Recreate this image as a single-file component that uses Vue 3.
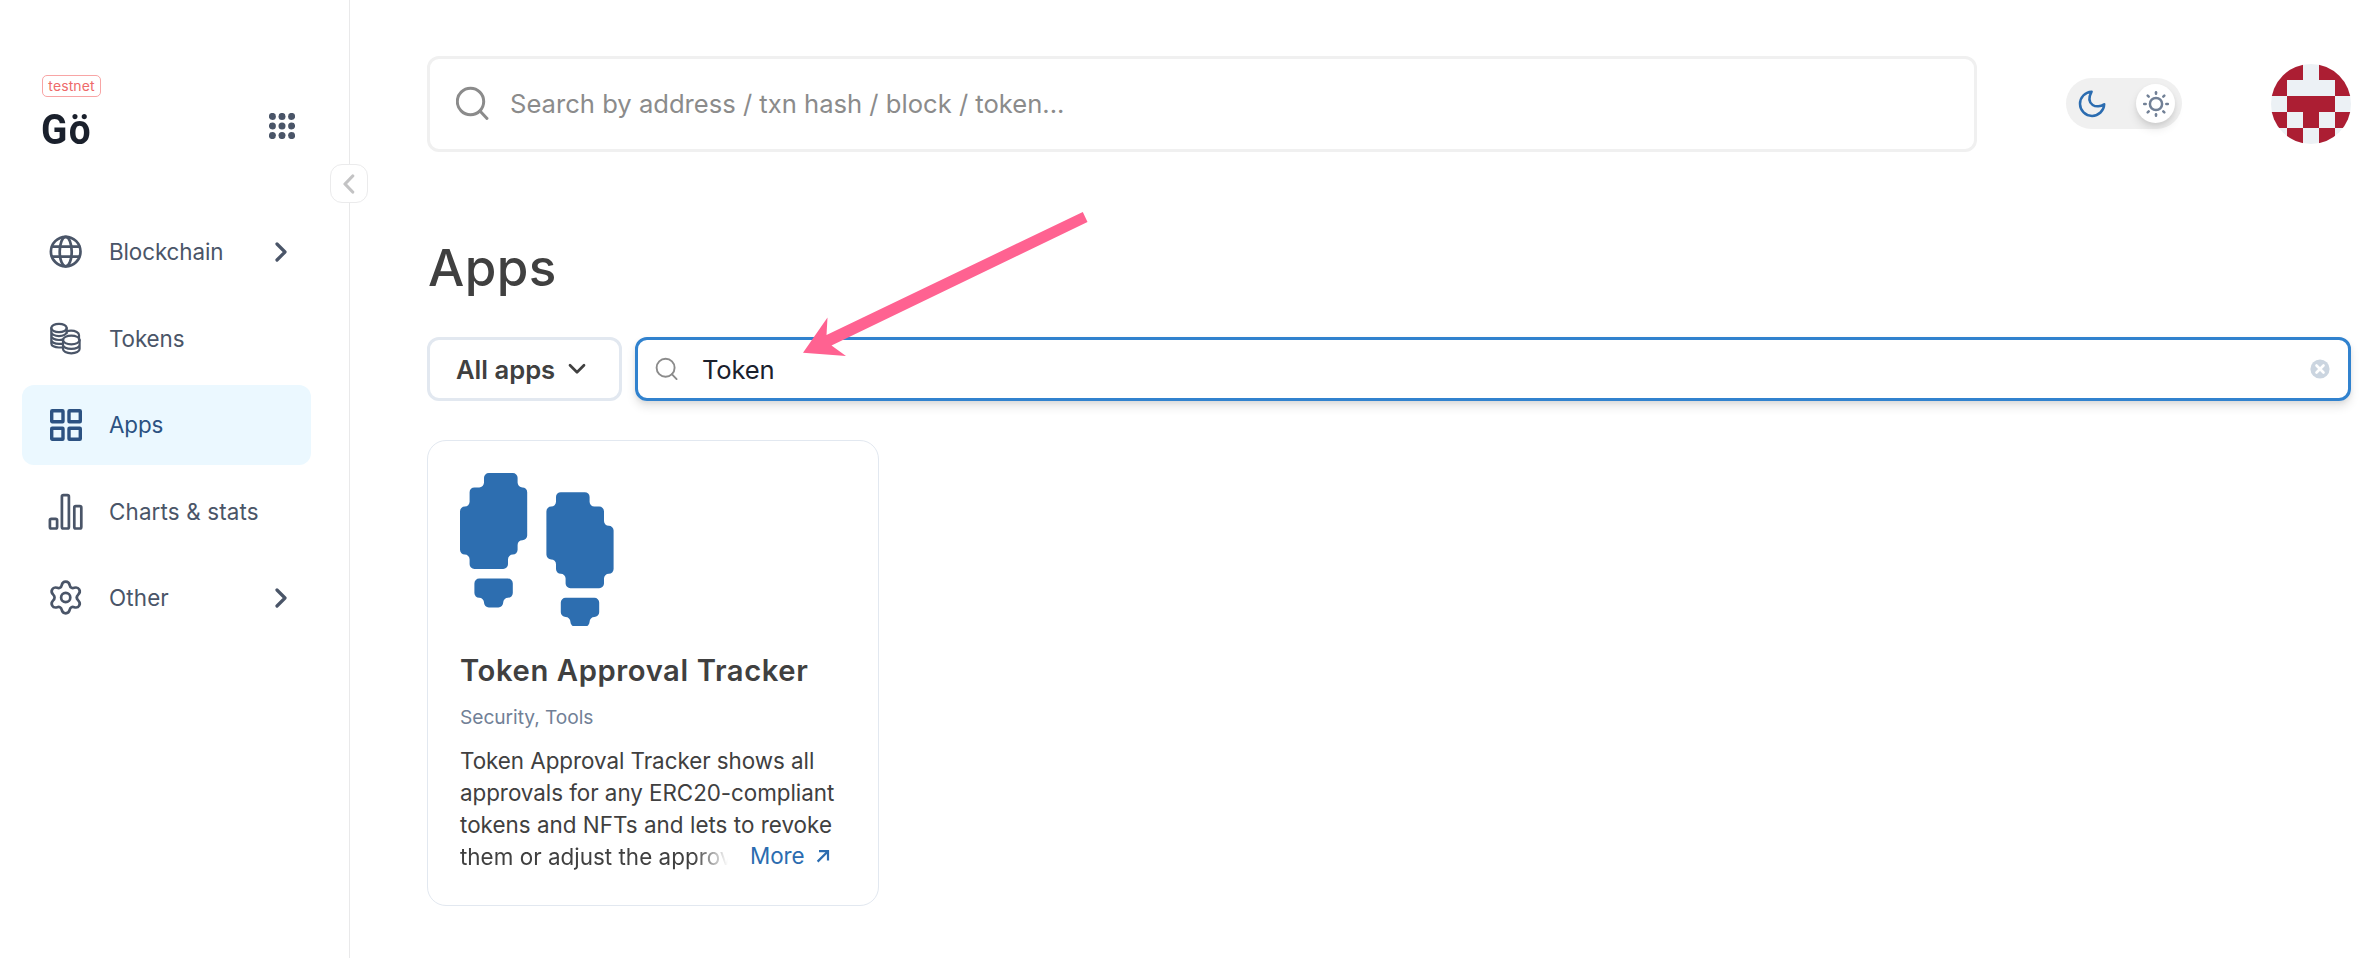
<script setup>
const nav = [
  { id: 'chain', label: 'Blockchain', more: true },
  { id: 'tokens', label: 'Tokens' },
  { id: 'apps', label: 'Apps', active: true },
  { id: 'charts', label: 'Charts & stats' },
  { id: 'other', label: 'Other', more: true },
]

// Turns a closed polygon into a path whose corners all have a one-unit radius.
function rounded(points) {
  const n = points.length
  let d = ''
  for (let i = 0; i < n; i++) {
    const [px, py] = points[(i + n - 1) % n]
    const [x, y] = points[i]
    const [qx, qy] = points[(i + 1) % n]
    const ax = x + Math.sign(px - x)
    const ay = y + Math.sign(py - y)
    const bx = x + Math.sign(qx - x)
    const by = y + Math.sign(qy - y)
    const sweep = (x - px) * (qy - y) - (y - py) * (qx - x) > 0 ? 1 : 0
    d += `${i ? 'L' : 'M'}${ax} ${ay}A1 1 0 0 ${sweep} ${bx} ${by}`
  }
  return d + 'Z'
}

const feet = [
  [[5, 0], [12, 0], [12, 3], [14, 3], [14, 14], [12, 14], [12, 17], [10, 17], [10, 20], [2, 20], [2, 17], [0, 17], [0, 7], [2, 7], [2, 3], [5, 3]],
  [[3, 22], [11, 22], [11, 26], [9, 26], [9, 28], [5, 28], [5, 26], [3, 26]],
  [[20, 4], [27, 4], [27, 7], [30, 7], [30, 11], [32, 11], [32, 21], [30, 21], [30, 24], [22, 24], [22, 21], [20, 21], [20, 18], [18, 18], [18, 7], [20, 7]],
  [[21, 26], [29, 26], [29, 30], [27, 30], [27, 32], [23, 32], [23, 30], [21, 30]],
].map(rounded).join('')

const avatar = ['11011', '10001', '01110', '10101', '01010']
const cells = avatar.flatMap((row, y) => [...row].map((on, x) => ({ x, y, on: on === '1' }))).filter(c => c.on)
const rays = [0, 45, 90, 135, 180, 225, 270, 315]
</script>

<template>
  <div class="page">
    <aside class="side">
      <header class="brand">
        <div>
          <span class="badge">testnet</span>
          <div class="logo">Gö</div>
        </div>
        <svg class="dots" width="26" height="26" viewBox="0 0 26 26">
          <template v-for="r in 3" :key="r">
            <circle v-for="c in 3" :key="c" :cx="3.4 + (c - 1) * 9.6" :cy="3.4 + (r - 1) * 9.6" r="3.5" />
          </template>
        </svg>
      </header>

      <button class="collapse" aria-label="Collapse menu">
        <svg width="12" height="20" viewBox="0 0 12 20"><path d="M9.700 2 2 10l7.700 8" /></svg>
      </button>

      <nav class="menu">
        <a v-for="item in nav" :key="item.id" class="item" :class="{ active: item.active }">
          <svg class="icon" width="36" height="38" viewBox="0 0 36 38">
            <g v-if="item.id === 'chain'" class="line">
              <circle cx="17.700" cy="18.600" r="14.800" />
              <ellipse cx="17.700" cy="18.600" rx="6" ry="14.800" />
              <path d="M4 13.600h27.400M4 23.600h27.400" />
            </g>
            <g v-else-if="item.id === 'tokens'" class="line thin">
              <ellipse cx="11" cy="8" rx="7.700" ry="4.200" />
              <path d="M3.300 8v15.500c0 2.200 3.200 4 7.700 4h3.200M18.700 8v5.200M3.300 11.800c0 2.500 3.400 4.300 7.700 4.300s7.700-1.800 7.700-4.300M3.300 15.800c0 2.400 3.400 4.200 7.700 4.200 1.600 0 3-.200 4.200-.600M3.300 19.800c0 2.300 3.300 4 7.700 4h3.200" />
              <path d="M18.700 11.500c1-.5 2.500-.8 4.300-.8 4.600 0 8 1.900 8 4.200v4.500" />
              <ellipse cx="23.300" cy="20" rx="8.300" ry="4.400" />
              <path d="M15 20v9c0 2.300 3.500 4.300 8.300 4.300s8.300-2 8.300-4.300v-9M15 24.700c0 2.300 3.500 4.200 8.300 4.200s8.300-1.900 8.300-4.200" />
            </g>
            <g v-else-if="item.id === 'apps'" class="line box">
              <rect x="3.700" y="4.700" width="11.300" height="11" rx=".5" />
              <rect x="21" y="4.700" width="11.300" height="11" rx=".5" />
              <rect x="3.700" y="22.200" width="11.300" height="11" rx=".5" />
              <rect x="21" y="22.200" width="11.300" height="11" rx=".5" />
            </g>
            <g v-else-if="item.id === 'charts'" class="line">
              <rect x="1.900" y="25.800" width="7.200" height="9.700" rx="1.500" />
              <rect x="13.900" y="2.200" width="7" height="33.300" rx="1.500" />
              <rect x="26.300" y="13.200" width="7" height="22.300" rx="1.500" />
            </g>
            <g v-else class="line" transform="translate(-.3 .6)">
              <path d="M14 5.600c.6-2.700 2-3.500 4-3.500s3.400.8 4 3.500c.5 2.400 2.300 3.300 4.500 2.600 2.600-.8 4-.1 5 1.600s.9 3.300-1 5.200c-1.800 1.800-1.800 4 0 5.800 1.900 1.900 2 3.500 1 5.200s-2.400 2.400-5 1.600c-2.200-.7-4 .2-4.500 2.600-.6 2.700-2 3.500-4 3.500s-3.400-.8-4-3.500c-.5-2.400-2.300-3.300-4.500-2.600-2.600.8-4 .1-5-1.600s-.9-3.300 1-5.200c1.800-1.800 1.800-4 0-5.800-1.900-1.900-2-3.500-1-5.200s2.400-2.400 5-1.600c2.200.7 4-.2 4.500-2.600Z" />
              <circle cx="18" cy="17.900" r="4.600" />
            </g>
          </svg>
          <span class="label" :class="{ wide: item.id === 'charts' || item.id === 'other' }">{{ item.label }}</span>
          <svg v-if="item.more" class="next" width="12" height="20" viewBox="0 0 12 20"><path d="m2 2 8 8-8 8" /></svg>
        </a>
      </nav>
    </aside>

    <main class="main">
      <div class="top">
        <div class="search">
          <svg width="34" height="36" viewBox="0 0 34 36"><circle cx="14.500" cy="15.500" r="13.200" /><path d="m24 25 7 7.500" /></svg>
          <span class="hint">Search by address / txn hash / block / token...</span>
        </div>
        <div class="toggle">
          <svg class="moon" width="28" height="28" viewBox="0 0 28 28">
            <path d="M13.600 1.700A12.100 12.100 0 1 0 26.200 14.200C19.300 19.300 6.500 15.200 13.600 1.700Z" />
          </svg>
          <span class="knob">
            <svg width="28" height="28" viewBox="0 0 28 28">
              <circle cx="14" cy="14" r="6.100" />
              <path v-for="a in rays" :key="a" d="M14 2.200v1.500" :transform="`rotate(${a} 14 14)`" />
            </svg>
          </span>
        </div>
        <svg class="avatar" width="80" height="80" viewBox="0 0 5 5" shape-rendering="crispEdges">
          <rect width="5" height="5" fill="#ecf1f5" />
          <rect v-for="c in cells" :key="`${c.x}-${c.y}`" :x="c.x" :y="c.y" width="1" height="1" fill="#ac1e33" />
        </svg>
      </div>

      <h1 class="title">Apps</h1>

      <div class="filters">
        <button class="select">
          <span class="select-text">All apps</span>
          <svg width="18" height="12" viewBox="0 0 18 12"><path d="m2 2.300 7 7 7-7" /></svg>
        </button>
        <div class="field">
          <svg class="glass" width="24" height="24" viewBox="0 0 24 24"><circle cx="10.600" cy="10.800" r="9" /><path d="m16.800 17.200 4.800 4.900" /></svg>
          <span class="value">Token</span>
          <svg class="clear" width="20" height="20" viewBox="0 0 20 20"><circle cx="10" cy="10" r="9.600" /><path d="m6.500 6.500 7 7m0-7-7 7" /></svg>
        </div>
      </div>

      <article class="card">
        <svg class="feet" width="153.600" height="153.600" viewBox="0 0 32 32"><path :d="feet" /></svg>
        <h2 class="name">Token Approval Tracker</h2>
        <div class="tags">Security, Tools</div>
        <p class="text">
          <span>Token Approval Tracker shows all</span>
          <span>approvals for any ERC20-compliant</span>
          <span class="full">tokens and NFTs and lets to revoke</span>
          <span class="full last">them or adjust the approv</span>
        </p>
        <a class="more">
          <span>More</span>
          <svg width="14" height="14" viewBox="0 0 14 14"><path d="M3 2.200h9v9.300M12 2.200 1.600 12.600" /></svg>
        </a>
      </article>
    </main>

    <svg class="pointer" width="286" height="146" viewBox="0 0 286 146">
      <path d="M0 142.700 24.500 107.500 23.500 125 279.800 2 284.500 12 28.500 135.500 43 146Z" />
    </svg>
  </div>
</template>

<style>
body { background: #fff; }
</style>

<style scoped>
.page {
  position: relative;
  display: grid;
  grid-template-columns: 350px 1fr;
  width: 2364px;
  height: 958px;
  overflow: hidden;
  box-sizing: border-box;
  font-family: Inter, "Liberation Sans", sans-serif;
  color: #404040;
}
.page *, .page *::before { box-sizing: border-box; }
svg { display: block; flex: none; }
path, circle, ellipse { stroke-linecap: round; stroke-linejoin: round; }
span { white-space: nowrap; }
button { font: inherit; color: inherit; margin: 0; }

.side { position: relative; border-right: 1px solid #e9e9ea; }
.brand {
  display: flex;
  justify-content: space-between;
  align-items: flex-start;
  height: 212px;
  padding: 75px 54px 0 42px;
}
.badge {
  display: block;
  width: 59px;
  height: 22px;
  border: 1px solid #f8a5a5;
  border-radius: 5px;
  color: #ee6a6a;
  font-size: 14px;
  letter-spacing: .1px;
  line-height: 20px;
  text-align: center;
}
.logo {
  margin: 7px 0 0 -1px;
  font: 700 43px/50px Roboto, sans-serif;
  letter-spacing: 1.500px;
  color: #1a202c;
  transform: scaleX(.9);
  transform-origin: 0 0;
}
.dots { margin-top: 38px; fill: #4a5568; }
.collapse {
  position: absolute;
  left: 330px;
  top: 164px;
  display: grid;
  place-items: center;
  width: 38px;
  height: 39px;
  padding: 0;
  border: 1px solid #ebebec;
  border-radius: 12px;
  background: #fff;
}
.collapse path { fill: none; stroke: #c3c3c4; stroke-width: 3.200; }

.menu { display: flex; flex-direction: column; gap: 6.500px; padding-left: 22px; }
.item {
  display: flex;
  align-items: center;
  width: 289px;
  height: 80px;
  padding: 0 24.500px 0 26px;
  border-radius: 12px;
  color: #4a5568;
}
.item.active { background: #ebf8ff; color: #2c5282; }
.label { flex: 1; margin-left: 25px; font-size: 22.400px; letter-spacing: -.1px; line-height: 32px; }
.label.wide { letter-spacing: .15px; }
.line { fill: none; stroke: currentColor; stroke-width: 2.700; }
.thin { stroke-width: 2.200; }
.box { stroke-width: 3.400; }
.next path { fill: none; stroke: currentColor; stroke-width: 3.200; }

.main { padding: 56px 13px 0 77px; }
.top { display: flex; align-items: center; height: 96px; }
.search {
  display: flex;
  align-items: center;
  width: 1550px;
  height: 96px;
  padding-left: 26px;
  border: 3px solid #f0f0f0;
  border-radius: 12px;
  color: #8b8b8b;
}
.search path, .search circle { fill: none; stroke: currentColor; stroke-width: 3; }
.hint { margin: -2px 0 0 20px; font-size: 25.600px; }
.toggle {
  display: flex;
  align-items: center;
  justify-content: space-between;
  width: 116px;
  height: 51px;
  margin: -1px 89px 0;
  padding: 0 7px 0 12px;
  border-radius: 26px;
  background: #f0f0f0;
}
.moon path { fill: none; stroke: #2b6cb0; stroke-width: 2.500; }
.knob {
  display: grid;
  place-items: center;
  width: 39px;
  height: 39px;
  border-radius: 50%;
  background: #fff;
  box-shadow: 0 6px 10px rgba(0, 0, 0, .1), 0 2px 4px rgba(0, 0, 0, .06);
}
.knob circle, .knob path { fill: none; stroke: #718096; stroke-width: 2.500; }
.avatar { border-radius: 50%; }

.title {
  margin: 83px 0 0 1px;
  font-size: 51.200px;
  font-weight: 500;
  letter-spacing: .4px;
  line-height: 64px;
}
.filters { display: flex; gap: 13px; margin-top: 38px; }
.select {
  display: flex;
  align-items: center;
  width: 195px;
  height: 64px;
  padding: 0 0 0 26px;
  border: 3px solid #e2e8f0;
  border-radius: 12px;
  background: #fff;
}
.select-text { width: 112px; font-size: 25.600px; font-weight: 600; text-align: left; }
.select path { fill: none; stroke: #404040; stroke-width: 2.700; }
.field {
  display: flex;
  align-items: center;
  flex: 1;
  height: 64px;
  padding: 0 18px 0 17px;
  border: 3px solid #3182ce;
  border-radius: 12px;
  box-shadow: 0 6px 10px rgba(0, 0, 0, .1), 0 2px 4px rgba(0, 0, 0, .06);
}
.glass path, .glass circle { fill: none; stroke: #8b8b8b; stroke-width: 1.900; }
.value { flex: 1; margin-left: 23px; font-size: 25.600px; letter-spacing: -.2px; color: #1a202c; }
.clear circle { fill: #cbd5e0; }
.clear path { stroke: #fff; stroke-width: 2.600; }

.card {
  position: relative;
  width: 452px;
  height: 466px;
  margin-top: 39px;
  padding: 31.700px 32px 0;
  border: 1px solid #e2e8f0;
  border-radius: 19px;
}
.feet { fill: #2d6eb0; }
.name { margin: 24.700px 0 0; font-size: 29.200px; font-weight: 600; letter-spacing: .6px; line-height: 40px; white-space: nowrap; }
.tags { margin-top: 13px; font-size: 19.200px; letter-spacing: -.05px; line-height: 26px; color: #718096; }
.text { margin: 15px 0 0; font-size: 22.400px; letter-spacing: -.04px; line-height: 32px; }
.text span { display: block; }
.text .full { letter-spacing: .03px; }
.text .last {
  width: 270px;
  -webkit-mask-image: linear-gradient(to right, #000 234px, transparent 268px);
  mask-image: linear-gradient(to right, #000 234px, transparent 268px);
}
.more {
  position: absolute;
  left: 322px;
  top: 399px;
  display: flex;
  align-items: center;
  gap: 12px;
  font-size: 22.400px;
  letter-spacing: -.1px;
  line-height: 32px;
  color: #2b6cb0;
}
.more path { fill: none; stroke: currentColor; stroke-width: 2.200; stroke-linecap: butt; stroke-linejoin: miter; }

.pointer { position: absolute; left: 803px; top: 210px; fill: #ff6291; }
</style>
